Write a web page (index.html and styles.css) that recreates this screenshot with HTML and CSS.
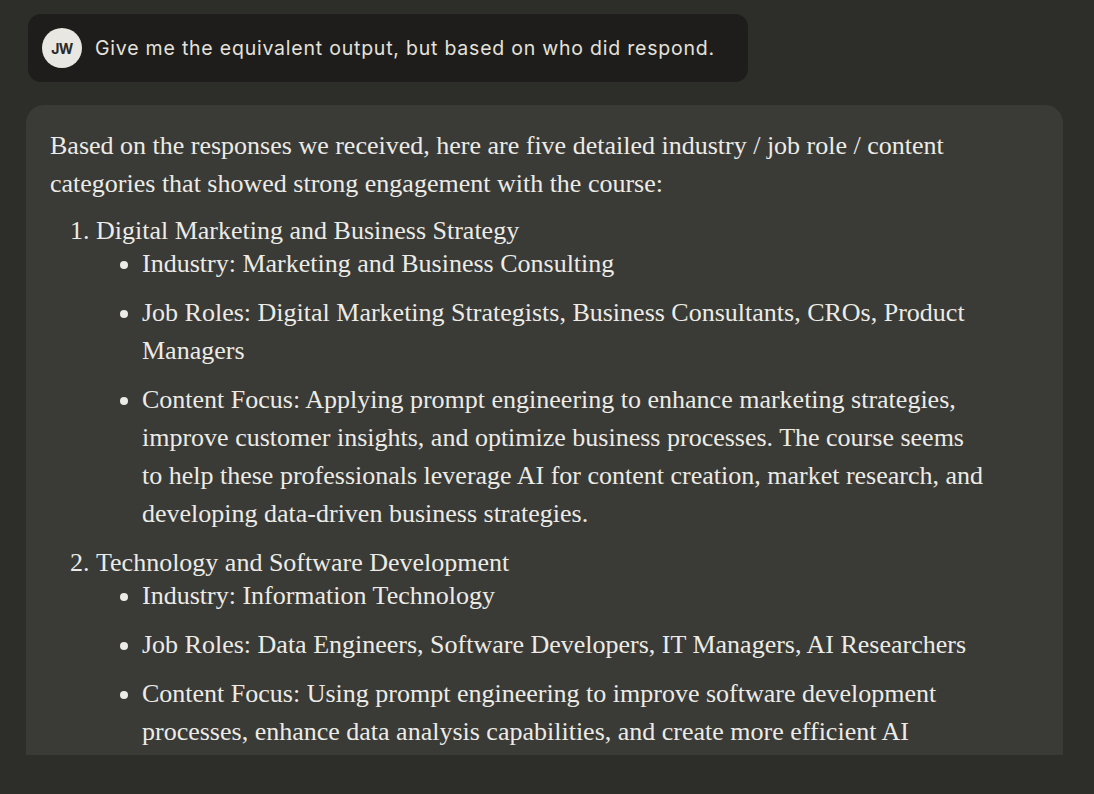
FILE: index.html
```html
<!DOCTYPE html>
<html>
<head>
<meta charset="utf-8">
<link rel="stylesheet" href="styles.css">
</head>
<body>
<div class="page">
  <div class="user-msg">
    <div class="avatar">JW</div>
    <div class="user-text">Give me the equivalent output, but based on who did respond.</div>
  </div>
  <div class="viewport">
    <div class="reply">
      <p class="intro">Based on the responses we received, here are five detailed industry / job role / content categories that showed strong engagement with the course:</p>
      <ol class="cats">
        <li>Digital Marketing and Business Strategy
          <ul>
            <li>Industry: Marketing and Business Consulting</li>
            <li>Job Roles: Digital Marketing Strategists, Business Consultants, CROs, Product Managers</li>
            <li>Content Focus: Applying prompt engineering to enhance marketing strategies, improve customer insights, and optimize business processes. The course seems to help these professionals leverage AI for content creation, market research, and developing data-driven business strategies.</li>
          </ul>
        </li>
        <li>Technology and Software Development
          <ul>
            <li>Industry: Information Technology</li>
            <li>Job Roles: Data Engineers, Software Developers, IT Managers, AI Researchers</li>
            <li>Content Focus: Using prompt engineering to improve software development processes, enhance data analysis capabilities, and create more efficient AI applications.</li>
          </ul>
        </li>
      </ol>
    </div>
  </div>
</div>
</body>
</html>
```
FILE: styles.css
```css
html, body {
  margin: 0;
  padding: 0;
  background: #2d2d2a;
}
.page {
  width: 1094px;
  height: 794px;
  overflow: hidden;
  box-sizing: border-box;
  padding: 14px 31px 0 26px;
}
.user-msg {
  display: flex;
  align-items: center;
  gap: 13px;
  width: 720px;
  height: 68px;
  margin-left: 2px;
  box-sizing: border-box;
  padding: 0 14px;
  background: #1e1d1b;
  border-radius: 13px;
}
.avatar {
  width: 40px;
  height: 40px;
  border-radius: 50%;
  background: #e9e7e1;
  color: #2a2a27;
  font-family: "Inter", "Liberation Sans", sans-serif;
  font-weight: 700;
  font-size: 14px;
  display: flex;
  align-items: center;
  justify-content: center;
  letter-spacing: -0.5px;
}
.user-text {
  font-family: "Inter", "Liberation Sans", sans-serif;
  font-size: 19.5px;
  color: #e4e2dc;
  letter-spacing: 0.78px;
}
.viewport {
  margin-top: 23px;
  height: 650px;
  overflow: hidden;
}
.reply {
  background: #3a3a37;
  border-radius: 18px;
  padding: 22px 75px 30px 24px;
  font-family: "Liberation Serif", "DejaVu Serif", serif;
  font-size: 26px;
  line-height: 38px;
  color: #ecebe5;
}
.intro {
  margin: 0 0 9px 0;
}
.cats {
  margin: 0;
  padding-left: 46px;
}
.cats > li {
  margin-bottom: 11px;
}
.cats ul {
  margin: -5px 0 0 0;
  padding-left: 46px;
  list-style: disc;
}
.cats ul li {
  margin-bottom: 11px;
}
```
